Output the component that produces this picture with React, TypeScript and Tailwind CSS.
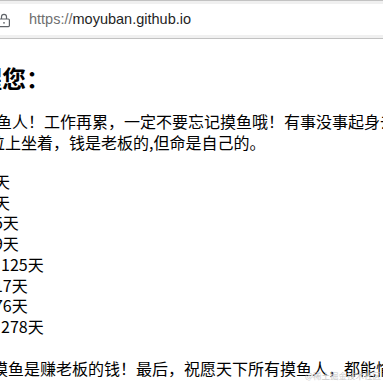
import React from 'react';

const ROWS = [
  '距离周末还有：2天',
  '距离周日还有：3天',
  '距离清明还有：15天',
  '距离端午还有：49天',
  '距离中秋节还有：125天',
  '距离国庆还有：117天',
  '距离元旦还有：176天',
  '距离除夕夜还有：278天',
];

function Lock() {
  return (
    <svg width="14" height="16" viewBox="0 0 14 16" fill="none" stroke="#5f6368" strokeWidth="1.2">
      <path d="M4.5 7V4.8a2.5 2.5 0 0 1 5 0V7" />
      <rect x="1.6" y="7" width="10.8" height="7.6" rx="1" />
      <circle cx="7" cy="10.8" r="0.9" fill="#5f6368" stroke="none" />
    </svg>
  );
}

export default function App() {
  return (
    <div className="relative w-[383px] h-[383px] overflow-hidden bg-white">
      {/* Address bar */}
      <div className="h-[39px] border-t border-b border-[#c2c2c2] bg-[#f0f0f0] py-[3px]">
        <div className="h-full bg-white flex items-center">
          <div className="-ml-[3px] mt-[1px]">
            <Lock />
          </div>
          <span className="ml-[18px] font-['Liberation_Sans',Arial,sans-serif] text-[14.5px] text-[#1f1f1f] whitespace-nowrap">
            <span className="text-[#6f6f6f]">https://</span>moyuban.github.io
          </span>
        </div>
      </div>

      {/* Page */}
      <div className="font-['Noto_Sans_CJK_SC',sans-serif] text-black whitespace-nowrap">
        <h2 className="-ml-[118px] mt-[23px] text-[24px] leading-[32px] font-bold">摸鱼办提醒您：</h2>
        <p className="-ml-[123px] indent-[7px] mt-[17px] text-[16px] leading-[21px]">
          下午好，各位摸鱼人！工作再累，一定不要忘记摸鱼哦！有事没事起身去茶水间，去厕所，去走廊
          <br />
          走走，别老在工位上坐着，钱是老板的,但命是自己的。
        </p>
        <div className="-ml-[127px] mt-[18px] text-[16px] leading-[20.7px]">
          {ROWS.map((r) => (
            <div key={r}>{r}</div>
          ))}
        </div>
        <p className="-ml-[152px] mt-[21px] text-[16px] leading-[21px]">
          上班是帮老板赚钱，摸鱼是赚老板的钱！最后，祝愿天下所有摸鱼人，都能愉快的渡过每一天！
        </p>
      </div>

      {/* Watermark */}
      <div className="absolute right-[2px] bottom-[1px] font-['Noto_Sans_CJK_SC',sans-serif] text-[8.5px] text-[#c9c9c9] whitespace-nowrap">
        @稀土掘金技术社区
      </div>
    </div>
  );
}
